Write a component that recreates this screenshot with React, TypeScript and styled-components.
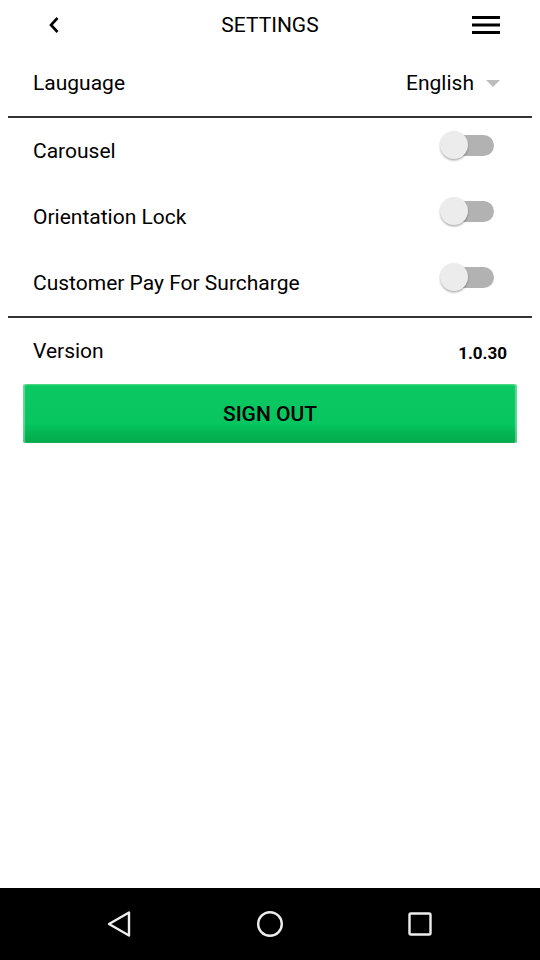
import React from "react";
import styled, { createGlobalStyle } from "styled-components";

const Global = createGlobalStyle`
  html, body { margin: 0; padding: 0; background: #fff; }
  body { font-family: Roboto, "Noto Sans", Arial, sans-serif; color: #000; }
  * { box-sizing: border-box; }
`;

const Screen = styled.div`
  width: 540px;
  height: 960px;
  display: flex;
  flex-direction: column;
  background: #fff;
`;

const Content = styled.div`
  flex: 1;
  display: flex;
  flex-direction: column;
`;

const Header = styled.header`
  height: 50px;
  display: grid;
  grid-template-columns: 1fr auto 1fr;
  align-items: center;
  padding: 0 40px 0 47px;
`;

const HeaderLeft = styled.div`
  display: flex;
  justify-content: flex-start;
`;

const HeaderRight = styled.div`
  display: flex;
  justify-content: flex-end;
`;

const Title = styled.h1`
  margin: 0 0 0 -7px;
  font-size: 21px;
  font-weight: 400;
  letter-spacing: 0;
  line-height: 50px;
`;

const IconButton = styled.button`
  border: 0;
  background: none;
  padding: 0;
  display: flex;
  align-items: center;
  justify-content: center;
`;

const Row = styled.div<{ $h: number }>`
  height: ${(p) => p.$h}px;
  display: flex;
  align-items: center;
  justify-content: space-between;
  padding: 0 33px;
`;

const Label = styled.span`
  font-size: 21px;
  line-height: 24px;
`;

const Select = styled.div`
  display: flex;
  align-items: center;
  gap: 12px;
  margin-right: 7px;
`;

const Caret = styled.span`
  width: 0;
  height: 0;
  border-left: 7px solid transparent;
  border-right: 7px solid transparent;
  border-top: 7px solid #bdbdbd;
  margin-top: 1px;
`;

const Divider = styled.hr`
  margin: 0 8px;
  border: 0;
  height: 2px;
  background: #333;
`;

const SwitchWrap = styled.div`
  position: relative;
  width: 54px;
  height: 30px;
  margin: 0 13px 12px 0;
`;

const Track = styled.div`
  position: absolute;
  left: 3px;
  right: 0;
  top: 5px;
  height: 21px;
  border-radius: 11px;
  background: #b2b2b2;
`;

const Thumb = styled.div`
  position: absolute;
  left: 0;
  top: 1px;
  width: 28px;
  height: 28px;
  border-radius: 50%;
  background: #ececec;
  box-shadow: 0 1.5px 2px rgba(0, 0, 0, 0.3);
`;

const Version = styled.span`
  font-size: 17px;
  font-weight: 700;
  margin: 4px 0 0 0;
`;

const SignOut = styled.button`
  margin: 0 23px;
  height: 59px;
  border: 0;
  border-radius: 2px;
  background: linear-gradient(
    to bottom,
    #4bd883 0px,
    #0cc862 2px,
    #07c55f 40px,
    #04b552 50px,
    #03a94a 59px
  );
  box-shadow: inset 2px 0 1px rgba(255,255,255,0.35), inset -2px 0 1px rgba(255,255,255,0.35);
  font-family: Roboto, Arial, sans-serif;
  font-size: 21px;
  font-weight: 500;
  color: #000;
  letter-spacing: 0;
`;

const NavBar = styled.nav`
  height: 72px;
  background: #000;
  display: grid;
  grid-template-columns: repeat(3, 150px);
  justify-content: center;
  align-items: center;
  justify-items: center;
`;

const Toggle = () => (
  <SwitchWrap>
    <Track />
    <Thumb />
  </SwitchWrap>
);

export default function App() {
  return (
    <Screen>
      <Global />
      <Content>
        <Header>
          <HeaderLeft>
            <IconButton aria-label="back">
              <svg width="14" height="18" viewBox="0 0 14 18">
                <path d="M10.5 2 L4 9 L10.5 16" fill="none" stroke="#000" strokeWidth="2.6" />
              </svg>
            </IconButton>
          </HeaderLeft>
          <Title>SETTINGS</Title>
          <HeaderRight>
            <IconButton aria-label="menu">
              <svg width="28" height="20" viewBox="0 0 28 20">
                <rect x="0" y="1" width="28" height="3" fill="#000" />
                <rect x="0" y="8.5" width="28" height="3" fill="#000" />
                <rect x="0" y="16" width="28" height="3" fill="#000" />
              </svg>
            </IconButton>
          </HeaderRight>
        </Header>
        <Row $h={66}>
          <Label>Lauguage</Label>
          <Select>
            <Label>English</Label>
            <Caret />
          </Select>
        </Row>
        <Divider />
        <Row $h={66}>
          <Label>Carousel</Label>
          <Toggle />
        </Row>
        <Row $h={66}>
          <Label>Orientation Lock</Label>
          <Toggle />
        </Row>
        <Row $h={66}>
          <Label>Customer Pay For Surcharge</Label>
          <Toggle />
        </Row>
        <Divider />
        <Row $h={66}>
          <Label>Version</Label>
          <Version>1.0.30</Version>
        </Row>
        <SignOut>SIGN OUT</SignOut>
      </Content>
      <NavBar>
        <svg width="30" height="30" viewBox="0 0 30 30">
          <path d="M24 3.5 L24 26.5 L4 15 Z" fill="none" stroke="#eee" strokeWidth="2.4" strokeLinejoin="round" />
        </svg>
        <svg width="30" height="30" viewBox="0 0 30 30">
          <circle cx="15" cy="15" r="11.8" fill="none" stroke="#eee" strokeWidth="2.4" />
        </svg>
        <svg width="30" height="30" viewBox="0 0 30 30">
          <rect x="4.5" y="4.5" width="21" height="21" rx="1.5" fill="none" stroke="#eee" strokeWidth="2.4" />
        </svg>
      </NavBar>
    </Screen>
  );
}
